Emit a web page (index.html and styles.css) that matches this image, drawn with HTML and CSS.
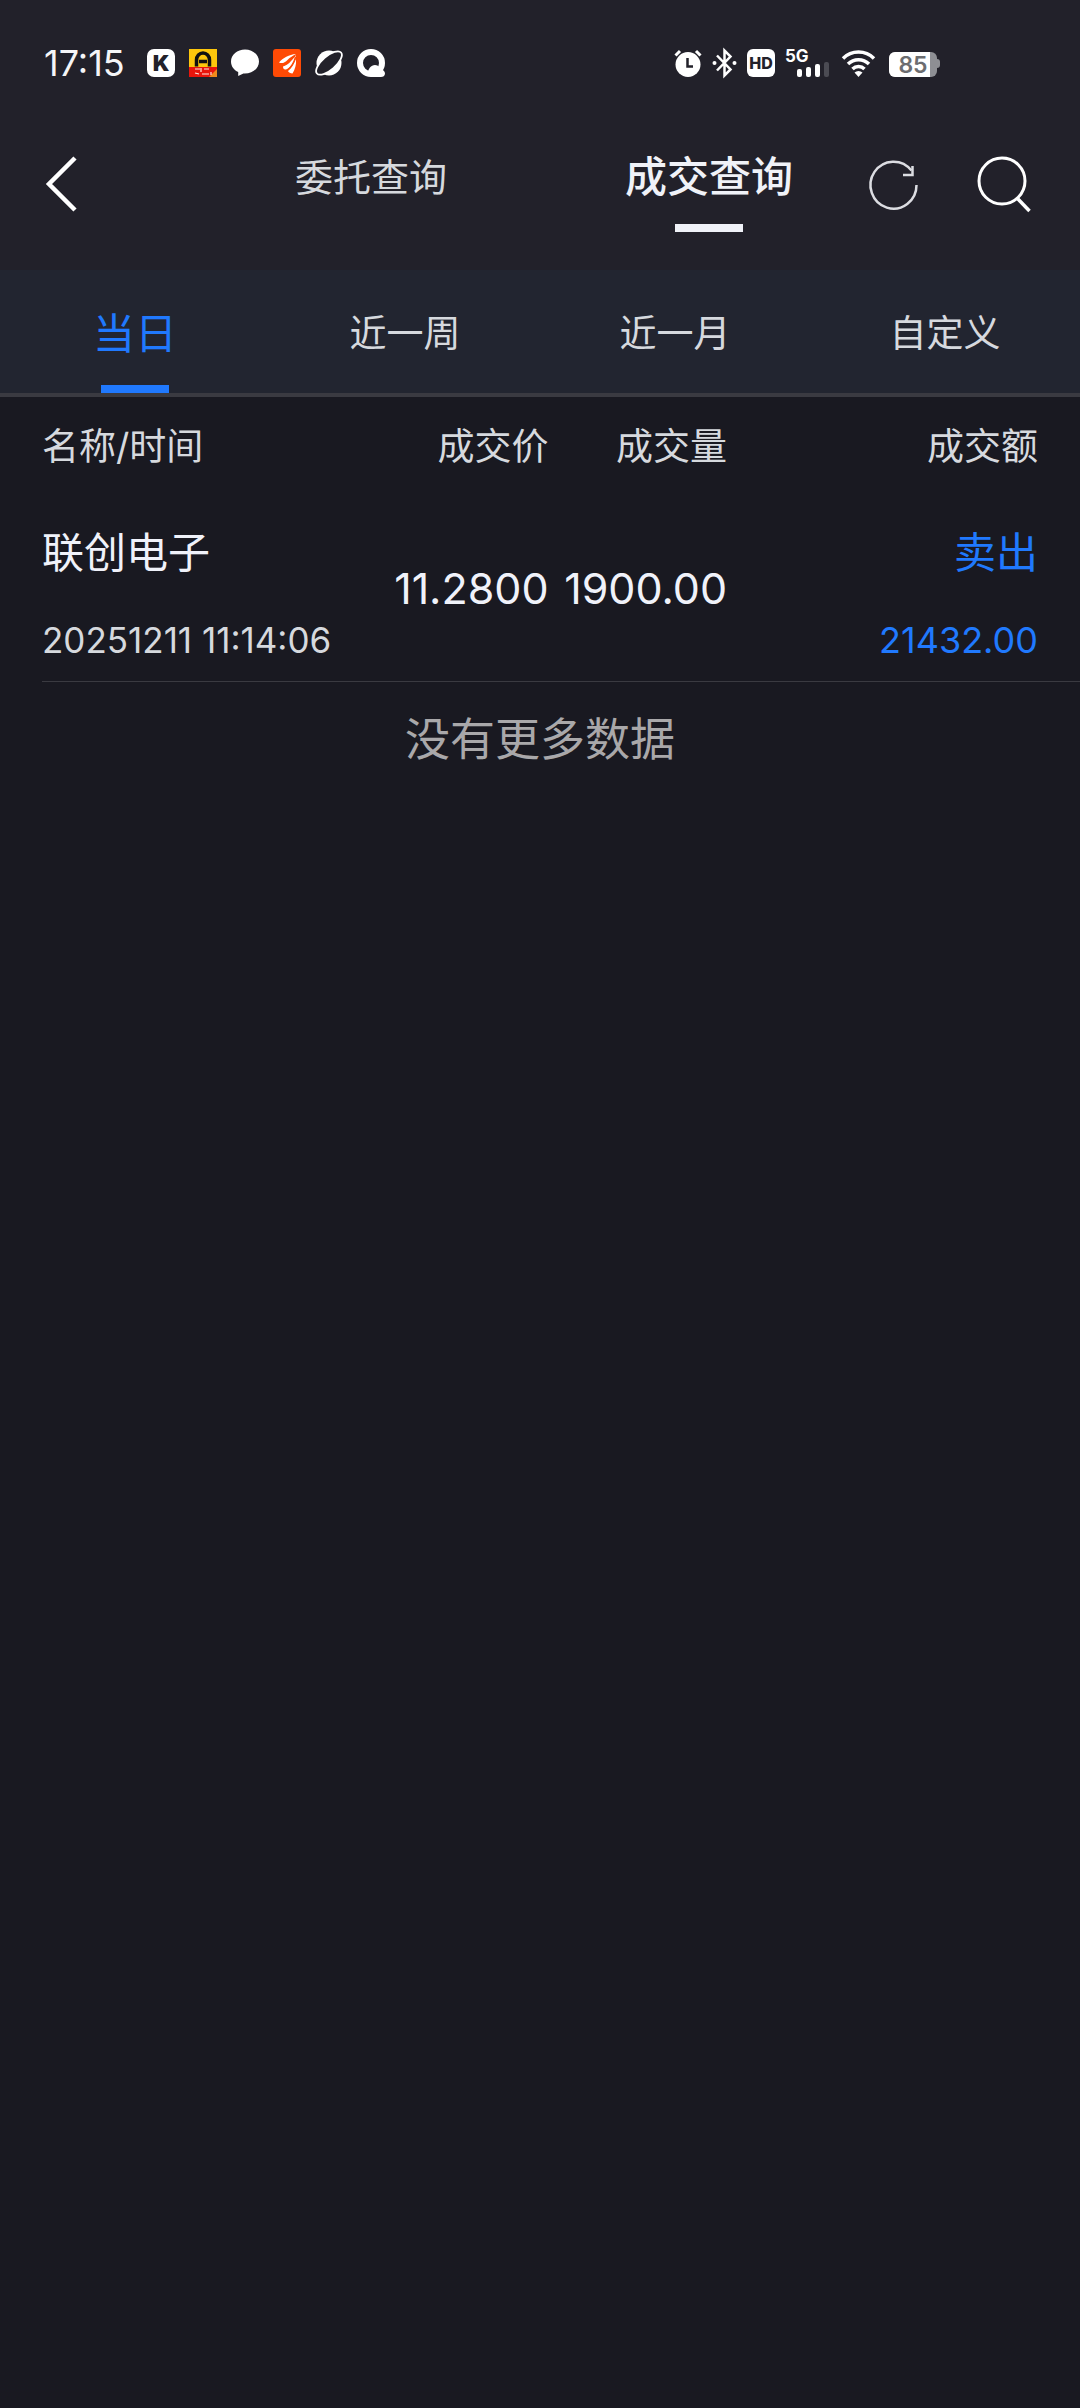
FILE: index.html
```html
<!DOCTYPE html>
<html lang="zh-CN">
<head>
    <meta charset="UTF-8">
    <meta name="viewport" content="width=device-width, initial-scale=1.0">
    <title>成交查询</title>
    <link rel="stylesheet" href="styles.css">
</head>
<body>

    <header class="header">
        <div class="status-bar">
            <div class="status-left">
                <time class="clock">17:15</time>
                <svg width="28" height="28" viewBox="0 0 28 28">
                    <rect width="28" height="28" rx="7" fill="#fff"/>
                    <text x="14" y="22" class="icon-k">K</text>
                </svg>
                <svg width="28" height="28" viewBox="0 0 28 28">
                    <rect width="28" height="18" fill="#fdc70c"/>
                    <rect y="18" width="28" height="10" fill="#e8150c"/>
                    <path d="M20 28l8-8v8z" fill="#f08a1c"/>
                    <path d="M7.500 17.500V11a6.500 7 0 0 1 13 0v6.500M10 12.500h8" fill="none" stroke="#111" stroke-width="3.500"/>
                    <path d="M6 20h5M12 19v4M15 20h5M6 24l4 1M13 25h7M22 23v3" stroke="#ffe9e0" stroke-width="1.200"/>
                </svg>
                <svg width="28" height="28" viewBox="0 0 28 28">
                    <path d="M14 .5C6.300.5 0 5.700 0 12.500c0 4.700 2.900 8.600 7.200 10.600V27l5.200-2.500c8.700.6 15.600-4.700 15.600-12C28 5.700 21.700.5 14 .5z" fill="#fff"/>
                </svg>
                <svg width="28" height="28" viewBox="0 0 28 28">
                    <rect width="28" height="28" rx="3" fill="#fe4a05"/>
                    <path d="M6 13.500C10 9 16 5.500 23 5c-3 2-6 3-9 6.500-2 2-5 3.500-8 2z" fill="#fff"/>
                    <path d="M10 17.500c5-1.500 8-5 13-11.500-1 6-4 12-10 14.500-2 .5-3-1-3-3z" fill="#fff"/>
                    <path d="M15 22c4-3 6-7 8-12 .5 6-1 10-3.500 14.500-2 0-4-1-4.500-2.500z" fill="#fff"/>
                    <path d="M9.500 16.500C14 15 18 11 22 6.500M14.500 21c4-3 6.500-8 8-13" fill="none" stroke="#fe4a05" stroke-width="1.200"/>
                </svg>
                <svg width="28" height="28" viewBox="0 0 28 28">
                    <circle cx="14" cy="14" r="12.500" fill="#fff"/>
                    <ellipse cx="14" cy="14" rx="16" ry="6.800" transform="rotate(-41 14 14)" fill="#22212a" stroke="#fff" stroke-width="1.800"/>
                </svg>
                <svg width="28" height="28" viewBox="0 0 28 28">
                    <circle cx="14" cy="14" r="11" fill="none" stroke="#fff" stroke-width="6"/>
                    <path d="M11 24c0-4 3-8 7-8s4 3 6 4 4 2 4 4.500-2 3.500-4 3.500H14z" fill="#fff"/>
                </svg>
            </div>
            <div class="status-right">
                <svg width="28" height="28" viewBox="0 0 28 28">
                    <circle cx="14" cy="15.500" r="12.500" fill="#fff"/>
                    <path d="M1.500 6.500L6 2M26.500 6.500L22 2" stroke="#fff" stroke-width="3"/>
                    <path d="M13.500 9v8.500H19" fill="none" stroke="#22212a" stroke-width="2.500"/>
                </svg>
                <svg width="25" height="28" viewBox="0 0 25 28">
                    <path d="M5 6.500L18.500 20.500l-6 6V1.500l6 6L5 21.500" fill="none" stroke="#fff" stroke-width="2.500"/>
                    <circle cx="2.500" cy="14" r="2" fill="#fff"/>
                    <circle cx="22.500" cy="14" r="2" fill="#fff"/>
                </svg>
                <svg width="28" height="28" viewBox="0 0 28 28">
                    <rect width="28" height="28" rx="6" fill="#fff"/>
                    <text x="14" y="20" class="icon-hd">HD</text>
                </svg>
                <svg width="46" height="28" viewBox="0 0 46 28">
                    <text x="0" y="13" class="icon-5g">5G</text>
                    <rect x="12" y="20" width="5" height="8" rx="2" fill="#fff"/>
                    <rect x="21" y="18" width="5" height="10" rx="2" fill="#fff"/>
                    <rect x="30" y="15" width="5" height="13" rx="2" fill="#fff"/>
                    <rect x="39" y="13" width="5" height="15" rx="2" fill="#4b4b53"/>
                </svg>
                <svg width="38" height="28" viewBox="0 0 38 28">
                    <path d="M2 9.500a22 22 0 0 1 31 0M7 15a15 15 0 0 1 21 0M11.500 20a8.500 8.500 0 0 1 12 0" fill="none" stroke="#fff" stroke-width="3.500"/>
                    <path d="M17.500 28l-4-4.500a6 6 0 0 1 8 0z" fill="#fff"/>
                </svg>
                <svg width="51" height="28" viewBox="0 0 51 28">
                    <path d="M46 10h2a3 3 0 0 1 3 3v3a3 3 0 0 1-3 3h-2z" fill="#8e8f94"/>
                    <rect y="3" width="48" height="25" rx="6" fill="#8e8f94"/>
                    <path d="M6 3h35v25H6a6 6 0 0 1-6-6V9a6 6 0 0 1 6-6z" fill="#fff"/>
                    <text x="24" y="24" class="icon-battery">85</text>
                </svg>
            </div>
        </div>

        <div class="nav-bar">
            <button class="icon-button back-button" aria-label="返回">
                <svg width="32" height="56" viewBox="0 0 32 56">
                    <path d="M29 2L3 28l26 26" fill="none" stroke="#fff" stroke-width="4.500"/>
                </svg>
            </button>
            <nav class="nav-list">
                <a href="#orders" class="nav-link">委托查询</a>
                <a href="#deals" class="nav-link is-active">成交查询</a>
            </nav>
            <div class="nav-actions">
                <button class="icon-button" aria-label="刷新">
                    <svg width="50" height="56" viewBox="0 0 50 56">
                        <path d="M47.500 29A23 23.500 0 1 1 42.500 14.500" fill="none" stroke="#dcdde2" stroke-width="2.500"/>
                        <path d="M43.500 10v9H34" fill="none" stroke="#dcdde2" stroke-width="2.500"/>
                    </svg>
                </button>
                <button class="icon-button" aria-label="搜索">
                    <svg width="56" height="56" viewBox="0 0 56 56">
                        <circle cx="26" cy="25" r="23" fill="none" stroke="#fff" stroke-width="3"/>
                        <path d="M41 42l12.500 13" stroke="#fff" stroke-width="3.500"/>
                    </svg>
                </button>
            </div>
        </div>
    </header>

    <nav class="period-tabs">
        <a href="#today" class="period-tab is-active">当日</a>
        <a href="#week" class="period-tab">近一周</a>
        <a href="#month" class="period-tab">近一月</a>
        <a href="#custom" class="period-tab">自定义</a>
    </nav>

    <main class="deals">
        <table class="deals-table">
            <thead>
                <tr>
                    <th class="col-name">名称/时间</th>
                    <th class="col-price">成交价</th>
                    <th class="col-volume">成交量</th>
                    <th class="col-amount">成交额</th>
                </tr>
            </thead>
            <tbody>
                <tr>
                    <td class="col-name">
                        <div class="cell-stack">
                            <span class="stock-name">联创电子</span>
                            <time class="deal-time" datetime="2025-12-11T11:14:06">20251211 11:14:06</time>
                        </div>
                    </td>
                    <td class="col-price">11.2800</td>
                    <td class="col-volume">1900.00</td>
                    <td class="col-amount">
                        <div class="cell-stack sell">
                            <span class="stock-name">卖出</span>
                            <span class="deal-amount">21432.00</span>
                        </div>
                    </td>
                </tr>
            </tbody>
        </table>
    </main>
    <p class="no-more">没有更多数据</p>

</body>
</html>
```

FILE: styles.css
```css
* {
    box-sizing: border-box;
}
body {
    margin: 0;
    min-height: 100vh;
    background-color: #191921;
    color: #d6d9de;
    font-family: Inter, "Noto Sans CJK SC", sans-serif;
    font-size: 37px;
}
a {
    text-decoration: none;
    color: inherit;
}
svg {
    display: block;
    overflow: visible;
}

/* --- 顶部 --- */
.header {
    background-color: #22212a;
}
.status-bar {
    display: flex;
    justify-content: space-between;
    align-items: center;
    height: 98px;
    padding: 28px 140px 0 44px;
}
.status-left, .status-right { display: flex; align-items: center; }
.status-left { gap: 14px; }
.status-right { gap: 10px; }
.clock {
    margin-right: 8px;
    color: #f5f5f7;
    font-size: 36px;
    line-height: 44px;
}
.icon-k { font-size: 22px; font-weight: 900; text-anchor: middle; fill: #22212a; }
.icon-hd { font-size: 16px; font-weight: 800; text-anchor: middle; fill: #22212a; }
.icon-5g { font-size: 17px; font-weight: 700; fill: #fff; }
.icon-battery { font-size: 23px; font-weight: 600; text-anchor: middle; fill: #6c6d70; }

.nav-bar {
    display: grid;
    grid-template-columns: 202px 1fr 202px;
    align-items: center;
    height: 172px;
}
.icon-button {
    padding: 0;
    border: none;
    background: none;
    cursor: pointer;
}
.back-button { justify-self: start; margin-left: 46px; }
.nav-list { display: flex; align-self: stretch; }
.nav-link {
    position: relative;
    flex: 1;
    padding-top: 49px;
    text-align: center;
    font-size: 38px;
    line-height: 60px;
}
.nav-link.is-active {
    color: #f0f2f8;
    font-size: 42px;
    font-weight: 500;
}
.nav-actions {
    display: flex;
    justify-content: flex-end;
    gap: 57px;
    padding-right: 48px;
}

/* 选中下划线 */
.nav-link.is-active::after,
.period-tab.is-active::after {
    content: "";
    position: absolute;
    left: 50%;
    width: 68px;
    height: 8px;
    margin-left: -34px;
    background-color: currentColor;
}
.nav-link.is-active::after { top: 126px; }
.period-tab.is-active::after { bottom: 0; }

/* --- 时间范围 --- */
.period-tabs {
    display: flex;
    border-bottom: 4px solid #3a3a41;
    background-color: #222530;
}
.period-tab {
    position: relative;
    flex: 1;
    padding: 34px 0 29px;
    text-align: center;
    line-height: 60px;
}
.period-tab.is-active {
    color: #2079fe;
    font-size: 42px;
}

/* --- 成交列表 --- */
.deals {
    padding-left: 42px;
}
.deals-table {
    width: 100%;
    table-layout: fixed;
    border-collapse: collapse;
}
.deals-table th {
    height: 98px;
    padding: 2px 0 0;
    font-weight: 400;
    line-height: 60px;
    text-align: right;
}
.deals-table td {
    padding: 28px 0 16px;
    text-align: right;
}
.deals-table tbody tr {
    border-bottom: 1px solid #3a3a41;
}
.deals-table .col-name { width: 31%; text-align: left; }
.deals-table .col-price { width: 18%; padding-right: 2px; }
.deals-table .col-volume { width: 17%; }
.deals-table .col-amount { width: 34%; padding-right: 42px; }
.deals-table td.col-price,
.deals-table td.col-volume {
    padding-top: 16px;
    color: #f0f2fa;
    font-size: 43px;
    line-height: 60px;
    white-space: nowrap;
}
.cell-stack {
    display: flex;
    flex-direction: column;
    gap: 32px;
    white-space: nowrap;
}
.stock-name {
    color: #f0f2fa;
    font-size: 42px;
    line-height: 60px;
}
.deal-time { font-size: 35px; line-height: 50px; }
.deal-amount { font-size: 36px; line-height: 50px; }
.sell, .sell .stock-name { color: #2079fe; }

.no-more {
    margin: 28px 0;
    color: #a9a8aa;
    font-size: 45px;
    line-height: 60px;
    text-align: center;
}
```
